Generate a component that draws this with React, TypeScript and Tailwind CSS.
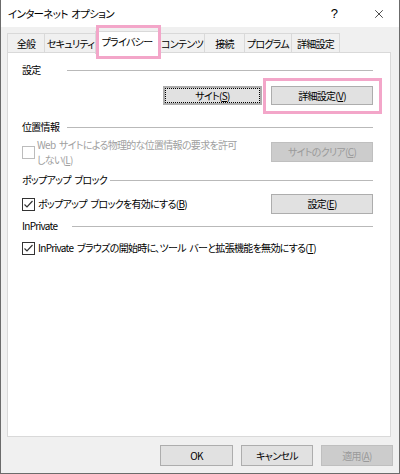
import React from "react";
import { X } from "lucide-react";

const Btn: React.FC<{
  className?: string;
  disabled?: boolean;
  focused?: boolean;
  children: React.ReactNode;
}> = ({ className = "", disabled = false, focused = false, children }) => (
  <button
    type="button"
    className={[
      "flex items-center justify-center whitespace-nowrap leading-none",
      disabled
        ? "bg-[#cccccc] border border-[#bfbfbf] text-[#9a9a9a]"
        : "bg-[#e1e1e1] border border-[#adadad] text-black",
      focused
        ? "border-2 border-[#0078d7] outline-1 outline-dotted outline-black outline-offset-[-3px]"
        : "",
      className,
    ].join(" ")}
  >
    {children}
  </button>
);

const CheckBox: React.FC<{ checked?: boolean; disabled?: boolean }> = ({
  checked = false,
  disabled = false,
}) => (
  <span
    className={
      "flex h-[13px] w-[13px] shrink-0 items-center justify-center bg-white border " +
      (disabled ? "border-[#bcbcbc]" : "border-[#333333]")
    }
  >
    {checked && (
      <svg width="11" height="11" viewBox="0 0 11 11">
        <polyline
          points="1.5,5.5 4,8 9.5,2"
          fill="none"
          stroke="#333333"
          strokeWidth="1.2"
        />
      </svg>
    )}
  </span>
);

const Header: React.FC<{ label: string; labelWidth: string; className?: string }> = ({
  label,
  labelWidth,
  className = "",
}) => (
  <div className={"flex h-[14px] items-center " + className}>
    <span className={"shrink-0 whitespace-nowrap " + labelWidth}>{label}</span>
    <span className="h-px flex-1 bg-[#b9b9b9]" />
  </div>
);

const tabs = [
  { label: "全般", cls: "w-[38px]" },
  { label: "セキュリティ", cls: "-ml-px w-[53px]" },
  { label: "プライバシー", cls: "-ml-[2px] w-[64px]", active: true },
  { label: "コンテンツ", cls: "w-[46px]" },
  { label: "接続", cls: "-ml-px w-[41px]" },
  { label: "プログラム", cls: "-ml-px w-[48px]" },
  { label: "詳細設定", cls: "-ml-px w-[49px]" },
];

export default function App() {
  return (
    <div className="relative flex h-[474px] w-[400px] flex-col overflow-hidden border-x border-b border-[#6b6b6b] bg-[#f0f0f0] font-['Noto_Sans_CJK_JP',sans-serif] text-[10px] leading-[14px] tracking-[-0.7px] text-black [word-spacing:2px] [font-feature-settings:'palt'_1]">
      {/* title bar */}
      <div className="flex h-[27px] shrink-0 items-center bg-white pl-[7px]">
        <span className="text-[10.5px]">インターネット オプション</span>
        <span className="ml-auto mr-[34px] font-['Liberation_Sans',sans-serif] text-[13px] tracking-normal">?</span>
        <span className="mr-[13px] flex items-center">
          <X size={14} strokeWidth={1.2} />
        </span>
      </div>

      {/* tabs */}
      <div className="mt-[4px] flex h-[21px] items-end pl-[6px]">
        {tabs.map((t) =>
          t.active ? (
            <div
              key={t.label}
              className={
                "relative z-10 -mb-[2px] flex h-[23px] items-center justify-center whitespace-nowrap border border-b-0 border-[#d9d9d9] bg-white pb-[3px] " +
                t.cls
              }
            >
              {t.label}
            </div>
          ) : (
            <div
              key={t.label}
              className={
                "flex h-[19px] items-center justify-center whitespace-nowrap border border-b-0 border-[#d9d9d9] bg-[#f0f0f0] pt-px " +
                t.cls
              }
            >
              {t.label}
            </div>
          )
        )}
      </div>

      {/* panel */}
      <div className="ml-[6px] flex h-[385px] w-[384px] flex-col border border-[#d9d9d9] bg-white pl-[14px] pr-[17px] pt-[10px]">
        <Header label="設定" labelWidth="w-[45px]" />
        <div className="mt-[9px] flex justify-end gap-[9px]">
          <Btn focused className="h-[19px] w-[99px]">
            サイト(<u>S</u>)
          </Btn>
          <Btn className="h-[19px] w-[102px]">
            詳細設定(<u>V</u>)
          </Btn>
        </div>

        <Header label="位置情報" labelWidth="w-[45px]" className="mt-[15px]" />
        <div className="mt-[3px] flex items-center">
          <CheckBox disabled />
          <span className="ml-[2px] flex flex-col leading-[15px] text-[#a0a0a0]">
            <span className="whitespace-nowrap">Web サイトによる物理的な位置情報の要求を許可</span>
            <span className="whitespace-nowrap">
              しない(<u>L</u>)
            </span>
          </span>
          <Btn disabled className="ml-auto h-[20px] w-[102px]">
            サイトのクリア(<u>C</u>)
          </Btn>
        </div>

        <Header label="ポップアップ ブロック" labelWidth="w-[88px]" className="mt-[6px]" />
        <div className="mt-[7px] flex items-center">
          <CheckBox checked />
          <span className="ml-[3px] whitespace-nowrap">
            ポップアップ ブロックを有効にする(<u>B</u>)
          </span>
          <Btn className="ml-auto h-[20px] w-[102px]">
            設定(<u>E</u>)
          </Btn>
        </div>

        <Header label="InPrivate" labelWidth="w-[50px]" className="mt-[5px]" />
        <div className="mt-[8px] flex items-center">
          <CheckBox checked />
          <span className="ml-[3px] whitespace-nowrap">
            InPrivate ブラウズの開始時に、ツール バーと拡張機能を無効にする(<u>T</u>)
          </span>
        </div>
      </div>

      {/* footer */}
      <div className="mt-[8px] flex justify-end gap-[8px] pr-[6px]">
        <Btn className="h-[21px] w-[73px]">OK</Btn>
        <Btn className="h-[21px] w-[72px]">キャンセル</Btn>
        <Btn disabled className="h-[21px] w-[72px]">
          適用(<u>A</u>)
        </Btn>
      </div>

      {/* pink annotation frames */}
      <div className="pointer-events-none absolute left-[95px] top-[25px] z-20 h-[34px] w-[65px] border-[3px] border-[#f3a6c9]" />
      <div className="pointer-events-none absolute left-[262px] top-[78px] z-20 h-[36px] w-[119px] border-[3px] border-[#f3a6c9]" />
    </div>
  );
}
